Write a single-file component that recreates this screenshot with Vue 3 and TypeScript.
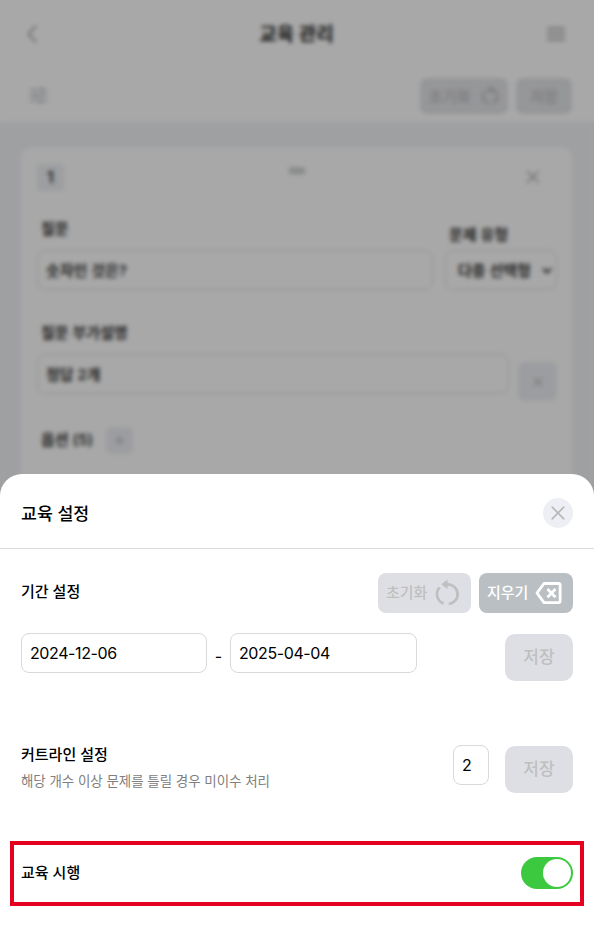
<script setup lang="ts">
import { ref } from 'vue'

const startDate = ref('2024-12-06')
const endDate = ref('2025-04-04')
const cutline = ref('2')
const enabled = ref(true)
</script>

<template>
  <div class="screen">
    <main class="page">
      <header class="topbar">
        <svg class="back" viewBox="0 0 12 22"><path d="M10.5 2L2 11l8.500 9" /></svg>
        <h1>교육 관리</h1>
        <svg class="menu" viewBox="0 0 18 14"><path d="M0 1.500h18M0 7h18M0 12.500h18" /></svg>
      </header>
      <div class="toolbar">
        <svg class="tune" viewBox="0 0 18 18"><path d="M0 3h9M12 3h6M12 0v6M0 9h4M7 9h11M5.500 6v6M0 15h7M10 15h8M10 12v6" /></svg>
        <div class="toolbar-actions">
          <button class="small-btn reset">초기화
            <svg viewBox="0 0 24 26"><path d="M9 24a10 10 0 0 1-4.500-17M15 24a10 10 0 0 0-4-19.500M13 1L9 4.500l4 4" /></svg>
          </button>
          <button class="small-btn save-small">저장</button>
        </div>
      </div>
      <div class="content">
        <section class="card">
          <div class="card-head">
            <span class="num">1</span>
            <svg class="drag" viewBox="0 0 16 7"><path d="M0 2h16M0 5.500h16" /></svg>
            <svg class="card-close" viewBox="0 0 14 14"><path d="M1 1l12 12M13 1L1 13" /></svg>
          </div>
          <div class="question-row">
            <div class="field grow">
              <label>질문</label>
              <div class="box">숫자인 것은?</div>
            </div>
            <div class="field type">
              <label>문제 유형</label>
              <div class="box select">다중 선택형
                <svg viewBox="0 0 10 7"><path d="M1 1.500l4 4 4-4" /></svg>
              </div>
            </div>
          </div>
          <div class="desc-row">
            <div class="field grow">
              <label>질문 부가설명</label>
              <div class="box">정답 2개</div>
            </div>
            <button class="remove"><svg viewBox="0 0 14 14"><path d="M2 2l10 10M12 2L2 12" /></svg></button>
          </div>
          <div class="option-row">
            <span>옵션 (5)</span>
            <button class="plus"><svg viewBox="0 0 14 14"><path d="M7 2v10M2 7h10" /></svg></button>
          </div>
        </section>
      </div>
    </main>
    <div class="overlay"></div>

    <section class="sheet">
      <header class="sheet-head">
        <h2>교육 설정</h2>
        <button class="close"><svg viewBox="0 0 14 14"><path d="M1.200 1.200l11.600 11.600M12.800 1.200L1.200 12.800" /></svg></button>
      </header>
      <div class="row period-head">
        <h3>기간 설정</h3>
        <div class="period-actions">
          <button class="action muted"><span>초기화</span>
            <svg class="reset-icon" viewBox="0 0 24 26"><path d="M8.700 23.400A9.700 9.700 0 0 1 4.700 7.400" /><path d="M13.800 23.900A9.700 9.700 0 0 0 12 4.500H9.500" /><path class="tip" d="M12.500-.3v9.300L6.300 4.300z" /></svg>
          </button>
          <button class="action clear"><span>지우기</span>
            <svg class="clear-icon" viewBox="0 0 28 24"><path d="M9 2.500H23.500a1.600 1.600 0 0 1 1.600 1.600V20a1.600 1.600 0 0 1-1.600 1.600H9L2 12z" /><path d="M12.500 8l8 8.200M20.500 8l-8 8.200" /></svg>
          </button>
        </div>
      </div>
      <div class="row dates">
        <input v-model="startDate" class="date" />
        <span class="dash">-</span>
        <input v-model="endDate" class="date" />
        <button class="save">저장</button>
      </div>
      <div class="row cut">
        <div class="cut-text">
          <h3>커트라인 설정</h3>
          <p>해당 개수 이상 문제를 틀릴 경우 미이수 처리</p>
        </div>
        <input v-model="cutline" class="count" />
        <button class="save">저장</button>
      </div>
      <div class="row run">
        <h3>교육 시행</h3>
        <button class="toggle" :class="{ on: enabled }" role="switch" :aria-checked="enabled" @click="enabled = !enabled"><i></i></button>
      </div>
    </section>
  </div>
</template>

<style>
body { background: #fff; overflow: hidden; }
</style>

<style scoped>
* { box-sizing: border-box; }
.screen { position: relative; width: 594px; height: 932px; overflow: hidden; font-family: Inter, "Noto Sans CJK KR", sans-serif; font-size: 15px; color: #000; }
h1, h2, h3, p { margin: 0; }
button, input { font: inherit; letter-spacing: inherit; border: 0; margin: 0; padding: 0; outline: 0; }
svg { display: block; fill: none; stroke: currentColor; flex: none; overflow: visible; }
.page { height: 932px; background: #f1f3f6; }
.topbar { height: 68px; padding: 0 29px 0 26px; display: flex; align-items: center; justify-content: space-between; background: #fff; color: #a0a0a0; }
.topbar h1 { font-size: 19px; font-weight: 700; color: #222; line-height: 24px; padding: 1px 0 0 8px; }
.back { width: 12px; height: 20px; stroke-width: 2; }
.menu { width: 18px; height: 14px; stroke-width: 2; }
.toolbar { height: 54px; padding: 10px 22px 8px 30px; display: flex; align-items: center; justify-content: space-between; background: #fff; }
.tune { width: 17px; height: 17px; margin-top: -2px; stroke-width: 2; color: #b9bfc2; }
.toolbar-actions { display: flex; gap: 8px; }
.small-btn { height: 36px; border-radius: 7px; background: #e4e5e9; color: #bcbcbc; display: flex; align-items: center; justify-content: center; font-size: 15px; font-weight: 500; padding-bottom: 2px; }
.small-btn.reset { width: 88px; gap: 12px; }
.small-btn.save-small { width: 56px; }
.small-btn svg { width: 17px; height: 19px; stroke-width: 3; }
.content { padding: 25px 22px 0 21px; }
.card { height: 500px; background: #fff; border-radius: 12px; padding: 17px 15px 0 16px; font-size: 15px; font-weight: 600; color: #333; }
.card-head { display: flex; justify-content: space-between; height: 28px; }
.num { width: 27px; height: 27px; border-radius: 3px; background: #edf0f4; text-align: center; line-height: 27px; font-size: 16px; }
.drag { width: 16px; height: 7px; margin-top: 3px; margin-left: 4px; stroke-width: 3; color: #c8cdcb; }
.card-close { width: 14px; height: 14px; margin: 6px 17px 0 0; color: #aaa; stroke-width: 1.6; }
.question-row, .desc-row { display: flex; gap: 12px; align-items: flex-end; }
.question-row { margin-top: 24px; height: 74px; }
.grow { flex: 1; }
.field label { display: block; line-height: 24px; padding: 1px 0 0 4px; margin-bottom: -2px; }
.box { margin-top: 11px; height: 40px; border: 1px solid #dcdcdc; border-radius: 8px; line-height: 40px; padding-left: 8px; }
.type { width: 112px; }
.type .box { margin-top: 5px; }
.select { display: flex; align-items: center; justify-content: space-between; padding: 1px 4px 0 12px; }
.select svg { width: 10px; height: 7px; stroke-width: 2; }
.desc-row { margin-top: 31px; gap: 9px; height: 73px; }
.remove { width: 39px; height: 39px; border-radius: 6px; background: #edeff3; margin-bottom: -7px; display: grid; place-items: center; color: #bbb; }
.remove svg { width: 12px; height: 12px; stroke-width: 1.6; }
.option-row { display: flex; gap: 13px; margin-top: 33px; align-items: center; padding-left: 4px; }
.option-row span { margin-top: -4px; }
.plus { width: 27px; height: 27px; border-radius: 6px; background: #edeff3; color: #bbb; display: grid; place-items: center; }
.plus svg { width: 13px; height: 13px; stroke-width: 1.8; }
.overlay { position: absolute; inset: 0; background: rgba(0, 0, 0, .34); backdrop-filter: blur(2px); }
.sheet { position: absolute; left: 0; right: 0; bottom: 0; height: 458px; background: #fff; border-radius: 22px 22px 0 0; }
.sheet-head { height: 75px; padding: 3px 21px 0; border-bottom: 1px solid #d9d9d9; display: flex; align-items: center; justify-content: space-between; }
h2 { font-size: 17.3px; font-weight: 500; line-height: 26px; padding-top: 2px; }
h3 { font-size: 15px; font-weight: 500; line-height: 24px; }
.close { width: 30px; height: 30px; border-radius: 50%; background: #eeeff4; color: #b9b9b9; display: grid; place-items: center; }
.close svg { width: 14px; height: 14px; stroke-width: 1.7; stroke-linecap: round; }
.row { display: flex; padding: 0 21px; }
.period-head { height: 40px; margin-top: 24px; align-items: center; justify-content: space-between; }
.period-head h3 { margin-top: -2px; }
.period-actions { display: flex; gap: 8px; }
.action { height: 40px; border-radius: 8px; display: flex; align-items: center; padding-left: 8px; font-weight: 500; }
.action span { line-height: 24px; margin-top: -1px; }
.muted { width: 93px; background: #dedfe5; color: #bfbfbf; gap: 8px; }
.clear { width: 94px; background: #babfc3; color: #fff; gap: 7px; }
.reset-icon { width: 24px; height: 26px; stroke-width: 2.7; }
.tip { fill: currentColor; stroke: none; }
.clear-icon { width: 28px; height: 24px; stroke-width: 2.8; stroke-linejoin: round; }
.dates { margin-top: 20px; height: 48px; }
.date, .count { height: 40px; border: 1px solid #d9d9d9; border-radius: 8px; padding-left: 8px; background: #fff; font-size: 16px; letter-spacing: -0.025em; color: #000; }
.date { width: 186px; }
.dates .date:nth-of-type(2) { width: 187px; }
.dash { width: 23px; text-align: center; line-height: 46px; font-size: 16px; }
.save { width: 68px; height: 47px; border-radius: 10px; margin: 1px 0 0 auto; padding-bottom: 5px; background: #dedfe5; color: #bfbfbf; font-size: 17px; font-weight: 500; }
.cut { margin-top: 64px; height: 48px; }
.cut-text { flex: 1; margin-top: -2px; }
.cut-text p { font-size: 13.5px; letter-spacing: -.05px; line-height: 24px; margin-top: 2px; color: #808080; white-space: nowrap; }
.count { width: 36px; }
.cut .save { margin-left: 16px; }
.run { margin: 48px 10px 0; height: 65px; border: 4px solid #e60020; padding: 0 7px 1px; align-items: center; justify-content: space-between; }
.run h3 { margin-top: -1px; }
.toggle { width: 52px; height: 32px; border-radius: 16px; padding: 2px; background: #ccc; display: flex; }
.toggle.on { background: #3dc93f; justify-content: flex-end; }
.toggle i { width: 28px; height: 28px; border-radius: 50%; background: #fff; }
</style>
